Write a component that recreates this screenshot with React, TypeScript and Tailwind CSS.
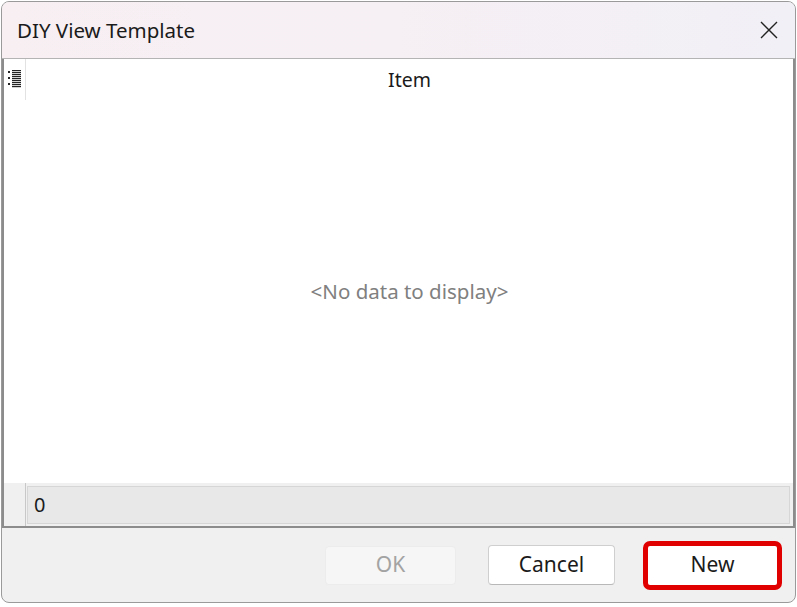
import React from "react";

function ListIcon() {
  return (
    <svg width="14" height="18" viewBox="0 0 14 18" fill="none">
      {[0, 6, 12].map((y) => (
        <g key={y}>
          <rect x="0" y={y + 1} width="2" height="2" fill="#222" />
          <rect x="4" y={y} width="9" height="1.2" fill="#222" />
          <rect x="4" y={y + 2} width="9" height="1.2" fill="#222" />
          <rect x="4" y={y + 4} width="9" height="1.2" fill="#222" />
        </g>
      ))}
    </svg>
  );
}

export default function App() {
  return (
    <div className="w-[797px] h-[607px] bg-white pt-[1px] pl-[1px] font-['Noto_Sans','Open_Sans',sans-serif]">
      <div className="w-[795px] h-[602px] border border-[#9a9a9a] rounded-[8px] overflow-hidden flex flex-col bg-[#f0f0f0]">
        {/* Title bar */}
        <div className="h-[57px] shrink-0 border-b border-[#b4b4b4] bg-gradient-to-r from-[#f7eff2] via-[#f6eff4] to-[#f1f0f6] flex items-center justify-between pl-[15px] pr-[17px]">
          <span className="text-[20.5px] text-[#1b1b1b] leading-none">DIY View Template</span>
          <svg width="18" height="18" viewBox="0 0 18 18">
            <path d="M1 1 L17 17 M17 1 L1 17" stroke="#222" strokeWidth="1.4" />
          </svg>
        </div>
        {/* Grid */}
        <div className="flex-1 flex flex-col border-l-2 border-r-2 border-b-2 border-[#8c8c8c] bg-white">
          <div className="h-[41px] shrink-0 flex">
            <div className="w-[22px] shrink-0 border-r border-[#e2e2e2] flex justify-center pt-[11px] pl-[1px]">
              <ListIcon />
            </div>
            <div className="flex-1 flex items-center justify-center text-[19.5px] text-[#1b1b1b] pt-[1px]">Item</div>
          </div>
          <div className="flex-1 flex items-center justify-center pl-[22px] text-[20.5px] text-[#808080]">
            &lt;No data to display&gt;
          </div>
          <div className="h-[43px] shrink-0 flex bg-[#f0f0f0]">
            <div className="w-[22px] shrink-0 border-r border-[#c8c8c8]" />
            <div className="flex-1 pt-[3px] pb-[2px] pl-[1px] pr-[3px]">
              <div className="h-full border border-[#d6d6d6] bg-[#e8e8e9] flex items-center pl-[6px] text-[20px] text-[#1b1b1b]">
                0
              </div>
            </div>
          </div>
        </div>
        {/* Buttons */}
        <div className="h-[74px] shrink-0 flex items-center justify-end pr-[13px]">
          <div className="w-[131px] h-[39px] rounded-[4px] bg-[#f6f6f6] border border-[#ececec] flex items-center justify-center text-[21px] text-[#a3a3a3]">
            OK
          </div>
          <div className="ml-[32px] w-[127px] h-[40px] rounded-[4px] bg-white border border-[#cfcfcf] border-b-[#b8b8b8] flex items-center justify-center text-[21px] text-[#1b1b1b]">
            Cancel
          </div>
          <div className="ml-[28px] w-[139px] h-[49px] rounded-[7px] border-[5px] border-[#e00000] bg-white flex items-center justify-center text-[21px] text-[#1b1b1b]">
            New
          </div>
        </div>
      </div>
    </div>
  );
}
